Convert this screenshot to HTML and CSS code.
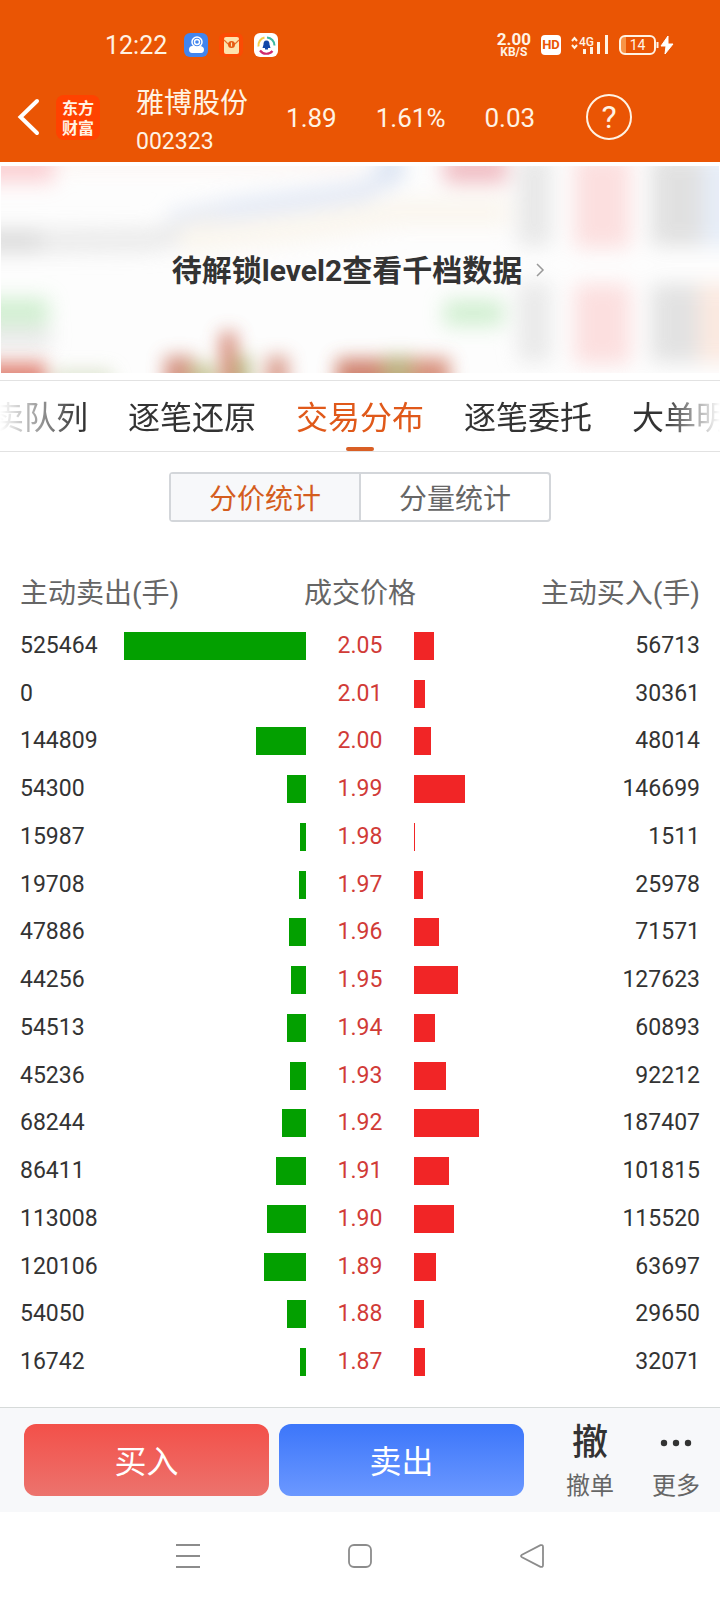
FILE: index.html
```html
<!DOCTYPE html>
<html lang="zh-CN">
<head>
  <meta charset="UTF-8" />
  <meta name="viewport" content="width=device-width, initial-scale=1.0" />
  <title>雅博股份 002323 – 交易分布</title>
  <link rel="stylesheet" href="styles.css">
</head>
<body>
  <header class="header">
    <!-- Status bar -->
    <div class="status-bar">
      <span class="clock">12:22</span>
      <div class="notifications">
        <svg width="24" height="24" viewBox="0 0 24 24">
          <rect width="24" height="24" rx="6" fill="#4285ee" />
          <path d="M5 16.500c0-2 1.500-3.500 3-3.500h8c2 0 4 1.500 4 3.500S19 20 17 20H8c-2 0-3-1.500-3-3.500z" fill="#fff" />
          <circle cx="13" cy="9" r="5" fill="#4285ee" stroke="#fff" stroke-width="1.500" />
          <circle cx="13" cy="9" r="2.500" fill="none" stroke="#fff" stroke-width="1.400" />
        </svg>
        <svg width="24" height="24" viewBox="0 0 24 24">
          <rect width="24" height="24" rx="6" fill="#fb4a04" />
          <rect x="5" y="4" width="15" height="17" rx="2" fill="#fde3ae" />
          <path d="M5 7l4 4h7l4-4" fill="none" stroke="#e8702a" stroke-width="1.200" />
          <circle cx="12.500" cy="11.500" r="3.500" fill="#e65a12" />
          <path d="M12.500 9.500v4" stroke="#fde3ae" stroke-width="1.200" />
        </svg>
        <svg width="24" height="24" viewBox="0 0 24 24">
          <rect width="24" height="24" rx="6" fill="#fff" />
          <path d="M4.500 13.500a8 8 0 0 1 6-9" fill="none" stroke="#f2cf4d" stroke-width="2" />
          <path d="M13 4.500a8 8 0 0 1 7.500 8" fill="none" stroke="#3fb8a0" stroke-width="2" />
          <path d="M6 17.500a8 8 0 0 0 12.500.500" fill="none" stroke="#d02a6c" stroke-width="2.200" />
          <path d="M12.500 7.500c2.500 0 3 2 3 4l1 3.500h-8l1-3.500c0-2 .500-4 3-4zM11 15h3v1.500h-3z" fill="#1147a8" />
        </svg>
      </div>
      <div class="status-right">
        <div class="net-speed"><b>2.00</b><small>KB/S</small></div>
        <span class="hd">HD</span>
        <svg width="38" height="22" viewBox="0 0 38 22">
          <path d="M1 7l2.500-3 2.500 3M1 11l2.500 3 2.500-3" fill="none" stroke="#fff3e4" stroke-width="2" />
          <text x="8" y="12" class="net-type">4G</text>
          <path d="M13.500 15v5M20.500 13v7M27.500 8v12M35.500 1v19" stroke="#fff3e4" stroke-width="3" />
        </svg>
        <div class="battery">
          <span class="battery-body">14</span>
          <svg width="18" height="20" viewBox="0 0 18 20">
            <path d="M1.500 7v6" stroke="#fff3e4" stroke-width="2" />
            <path d="M12 1L5 11h5l-1 8 8-10h-5z" fill="#fff" stroke="#fff" stroke-linejoin="round" />
          </svg>
        </div>
      </div>
    </div>

    <!-- Stock bar -->
    <div class="stock-bar">
      <button class="icon-btn" aria-label="返回">
        <svg width="24" height="40" viewBox="0 0 24 40">
          <path d="M21 4L4.500 20 21 36" fill="none" stroke="#fff" stroke-width="4" stroke-linecap="round" />
        </svg>
      </button>
      <div class="logo">东方<br>财富</div>
      <div class="stock-name">
        <h1>雅博股份</h1>
        <span>002323</span>
      </div>
      <div class="quote">
        <span>1.89</span>
        <span>1.61%</span>
        <span>0.03</span>
      </div>
      <button class="icon-btn help" aria-label="帮助">?</button>
    </div>
  </header>

  <!-- Level2 banner -->
  <a class="banner" href="#">
    <svg class="banner-bg" viewBox="0 0 720 207" preserveAspectRatio="none">
      <defs>
        <filter id="soft" x="-20%" y="-20%" width="140%" height="140%"><feGaussianBlur stdDeviation="10" /></filter>
        <filter id="soft-bars" x="-20%" y="-50%" width="140%" height="200%"><feGaussianBlur stdDeviation="9" /></filter>
      </defs>
      <g filter="url(#soft)" opacity="0.8">
        <rect x="-20" y="-14" width="74" height="30" fill="#fbc6ca" />
        <rect x="60" y="-12" width="300" height="16" fill="#fdf3ef" />
        <path d="M170 56L240 42 360 26 400 4" fill="none" stroke="#dfe6f4" stroke-width="22" />
        <path d="M-20 75H45" fill="none" stroke="#d4d4d4" stroke-width="24" />
        <path d="M40 75L150 74 220 58" fill="none" stroke="#e6e6e6" stroke-width="24" />
        <path d="M180 74L300 62 400 46H510" fill="none" stroke="#faf5ec" stroke-width="30" />
        <rect x="378" y="-12" width="26" height="26" fill="#d3def0" />
        <rect x="444" y="-14" width="64" height="32" fill="#eeb0b8" />
        <rect x="-20" y="132" width="68" height="28" fill="#c6ecc6" />
        <rect x="-20" y="162" width="70" height="20" fill="#e4e4e4" />
        <rect x="444" y="134" width="60" height="26" fill="#c6ecc6" />
        <rect x="518" y="-10" width="34" height="90" fill="#e3e3e3" />
        <rect x="518" y="116" width="34" height="80" fill="#e5e5e5" />
        <rect x="575" y="-10" width="56" height="92" fill="#fcd8d8" />
        <rect x="575" y="118" width="56" height="80" fill="#fcd8d8" />
        <rect x="652" y="-10" width="54" height="90" fill="#dadada" />
        <rect x="652" y="118" width="54" height="78" fill="#dcdcdc" />
        <rect x="704" y="-10" width="40" height="90" fill="#e2eaf7" />
        <rect x="700" y="118" width="44" height="78" fill="#fbe5da" />
      </g>
      <g filter="url(#soft-bars)" opacity="0.75">
        <rect x="-20" y="196" width="66" height="44" fill="#d8624f" />
        <rect x="52" y="204" width="60" height="30" fill="#d3dcc0" />
        <rect x="164" y="190" width="30" height="50" fill="#c8705a" />
        <rect x="190" y="198" width="24" height="40" fill="#b2b878" />
        <rect x="220" y="166" width="16" height="70" fill="#c8604a" />
        <rect x="236" y="190" width="14" height="50" fill="#a0a860" />
        <rect x="266" y="190" width="22" height="50" fill="#cf7f6a" />
        <rect x="336" y="192" width="50" height="48" fill="#c25f45" />
        <rect x="384" y="190" width="30" height="50" fill="#a59a58" />
        <rect x="412" y="192" width="38" height="48" fill="#cc6f55" />
      </g>
    </svg>
    <span>待解锁level2查看千档数据</span>
    <svg width="10" height="14" viewBox="0 0 10 14">
      <path d="M1 1l6 6-6 6" fill="none" stroke="#999" stroke-width="1.500" />
    </svg>
  </a>

  <!-- Tabs -->
  <nav class="tabs">
    <div class="tabs-list">
      <a href="#">买卖队列</a>
      <a href="#">逐笔还原</a>
      <a href="#" class="active">交易分布</a>
      <a href="#">逐笔委托</a>
      <a href="#">大单明细</a>
    </div>
  </nav>

  <main class="content">
    <div class="segment">
      <button class="active">分价统计</button>
      <button>分量统计</button>
    </div>

    <table class="dist">
      <thead>
        <tr>
          <th class="sell">主动卖出(手)</th>
          <th class="price">成交价格</th>
          <th class="buy">主动买入(手)</th>
        </tr>
      </thead>
      <tbody id="rows"></tbody>
    </table>
  </main>

  <!-- Trade buttons -->
  <footer class="trade-bar">
    <button class="trade-btn buy-btn">买入</button>
    <button class="trade-btn sell-btn">卖出</button>
    <div class="tools">
      <button class="tool"><span class="tool-icon">撤</span>撤单</button>
      <button class="tool">
        <span class="tool-icon">
          <svg width="32" height="8" viewBox="0 0 32 8">
            <circle cx="4" cy="4" r="3.200" fill="#333" />
            <circle cx="16" cy="4" r="3.200" fill="#333" />
            <circle cx="28" cy="4" r="3.200" fill="#333" />
          </svg>
        </span>更多
      </button>
    </div>
  </footer>

  <!-- System navigation -->
  <div class="system-nav">
    <button class="icon-btn" aria-label="最近任务">
      <svg width="24" height="24" viewBox="0 0 24 24">
        <path d="M0 1h24M0 12h24M0 23h24" stroke="#8c8c8c" stroke-width="2" />
      </svg>
    </button>
    <button class="icon-btn" aria-label="主屏幕">
      <svg width="24" height="24" viewBox="0 0 24 24">
        <rect x="1" y="1" width="22" height="22" rx="5" fill="none" stroke="#8c8c8c" stroke-width="1.800" />
      </svg>
    </button>
    <button class="icon-btn" aria-label="返回上一页">
      <svg width="24" height="24" viewBox="0 0 24 24">
        <path d="M2 10.700L20.500 1.200Q23 .500 23 3v18q0 2.500-2.500 1.800L2 13.300Q0 12 2 10.700z" fill="none" stroke="#8c8c8c" stroke-width="1.800" />
      </svg>
    </button>
  </div>

  <script src="script.js"></script>
</body>
</html>
```

FILE: styles.css
```css
* {
  box-sizing: border-box;
}

body {
  margin: 0;
  min-height: 100vh;
  display: flex;
  flex-direction: column;
  font-family: Roboto, "Noto Sans CJK SC", sans-serif;
  background: #fff;
  color: #333;
}

button {
  font-family: inherit;
  border: none;
  padding: 0;
  background: none;
  cursor: pointer;
}

a {
  color: inherit;
  text-decoration: none;
}

svg {
  display: block;
}

/* Header */
.header {
  background: #ea5504;
  color: #fff3e4;
}

.status-bar {
  display: flex;
  align-items: center;
  height: 90px;
  padding: 0 46px 0 105px;
}

.clock {
  font-size: 25px;
}

.notifications {
  display: flex;
  gap: 11px;
  margin-left: 17px;
}

.status-right {
  display: flex;
  align-items: center;
  gap: 10px;
  margin-left: auto;
}

.net-speed {
  display: flex;
  flex-direction: column;
  align-items: center;
}

.net-speed b {
  font-size: 17px;
  line-height: 13px;
}

.net-speed small {
  font-size: 12px;
  line-height: 12px;
  font-weight: bold;
}

.hd {
  width: 20px;
  height: 20px;
  border-radius: 4px;
  background: #fff;
  color: #ea5504;
  font-size: 13px;
  font-weight: bold;
  line-height: 20px;
  text-align: center;
}

.net-type {
  fill: #fff3e4;
  font-size: 12px;
  font-weight: 500;
}

.battery {
  display: flex;
  align-items: center;
}

.battery-body {
  width: 37px;
  height: 20px;
  border: 2px solid #fff3e4;
  border-radius: 6px;
  background: linear-gradient(90deg, #f79447 5px, transparent 5px);
  font-size: 14px;
  line-height: 16px;
  text-align: center;
}

.stock-bar {
  display: flex;
  align-items: center;
  height: 72px;
  padding: 0 16px 18px;
}

.icon-btn {
  color: inherit;
}

.logo {
  width: 44px;
  height: 45px;
  margin: 0 36px 0 16px;
  padding-top: 2px;
  border-radius: 8px;
  background: #ff4200;
  font-family: "Noto Sans CJK SC", sans-serif;
  font-size: 16px;
  font-weight: bold;
  line-height: 20px;
  text-align: center;
}

.stock-name {
  margin-top: 10px;
}

.stock-name h1 {
  margin: 0;
  font-size: 28px;
  font-weight: normal;
  line-height: 40px;
}

.stock-name span {
  display: block;
  font-size: 23px;
  line-height: 36px;
}

.quote {
  display: flex;
  gap: 39px;
  margin: 2px 51px 0 38px;
  font-size: 26px;
}

.help {
  width: 46px;
  height: 46px;
  border: 2px solid #fff3e4;
  border-radius: 50%;
  font-size: 32px;
  line-height: 42px;
}

/* Level2 banner */
.banner {
  position: relative;
  display: flex;
  align-items: center;
  justify-content: center;
  gap: 14px;
  height: 207px;
  margin: 4px 1px 7px;
  padding-right: 2px;
  background: #fdfdfd;
  font-size: 30px;
  font-weight: bold;
  line-height: 36px;
}

.banner-bg {
  position: absolute;
  top: 0;
  left: 0;
  width: 100%;
  height: 100%;
  overflow: hidden;
}

.banner span,
.banner-bg + span + svg {
  position: relative;
}

.banner span {
  padding-top: 2px;
}

/* Tabs */
.tabs {
  border-top: 1px solid #e2e2e2;
  border-bottom: 1px solid #e2e2e2;
}

.tabs-list {
  display: flex;
  justify-content: center;
  gap: 40px;
  overflow: hidden;
  -webkit-mask-image: linear-gradient(90deg, transparent, #000 80px, #000 calc(100% - 56px), transparent);
  mask-image: linear-gradient(90deg, transparent, #000 80px, #000 calc(100% - 56px), transparent);
}

.tabs a {
  position: relative;
  flex: none;
  padding-top: 4px;
  font-size: 32px;
  line-height: 66px;
}

.tabs a.active {
  color: #e0591a;
}

.tabs a.active::after {
  content: "";
  position: absolute;
  bottom: 0;
  left: 50%;
  width: 28px;
  height: 4px;
  margin-left: -14px;
  border-radius: 2px;
  background: #d95f25;
}

/* Content */
.content {
  flex: 1;
  display: flex;
  flex-direction: column;
  padding: 20px 20px 21px;
}

.segment {
  display: flex;
  width: 382px;
  height: 50px;
  margin: 0 auto 44px;
  border: 2px solid #d3d6da;
  border-radius: 4px;
}

.segment button {
  flex: 1;
  color: #666;
  font-size: 28px;
}

.segment button.active {
  border-right: 2px solid #d3d6da;
  background: #f7f8fa;
  color: #d45d1e;
}

.dist {
  flex: 1;
  display: flex;
  flex-direction: column;
}

.dist tbody {
  flex: 1;
  display: flex;
  flex-direction: column;
}

.dist thead tr {
  display: flex;
  justify-content: space-between;
}

.dist th {
  padding: 0;
  color: #666;
  font-size: 28px;
  font-weight: normal;
  line-height: 56px;
}

.dist tbody tr {
  flex: 1;
  display: grid;
  grid-template-columns: 104px 1fr 108px 1fr 104px;
  align-items: center;
}

.dist td {
  padding: 0;
  font-size: 23px;
  line-height: 28px;
}

.dist td.price {
  color: #d13b37;
  text-align: center;
}

.dist td.buy {
  text-align: right;
}

.bar {
  height: 28px;
}

.bar-sell {
  margin-left: auto;
  background: #03a000;
}

.bar-buy {
  background: #f12526;
}

/* Trade buttons */
.trade-bar {
  display: flex;
  align-items: center;
  gap: 10px;
  height: 105px;
  padding: 0 20px 0 24px;
  border-top: 1px solid #d6dad9;
  background: #f7f8fa;
}

.trade-btn {
  flex: 1;
  height: 72px;
  padding-bottom: 3px;
  border-radius: 12px;
  color: #fff;
  font-size: 32px;
}

.buy-btn {
  background: linear-gradient(#f35049, #ec736d);
}

.sell-btn {
  background: linear-gradient(#3c76fa, #6b98ff);
}

.tools {
  display: flex;
  gap: 38px;
  margin-left: 32px;
}

.tool {
  padding-top: 2px;
  color: #666;
  font-size: 24px;
  line-height: 36px;
}

.tool-icon {
  display: flex;
  align-items: center;
  justify-content: center;
  height: 50px;
  color: #333;
  font-size: 36px;
  font-weight: 500;
}

/* System navigation */
.system-nav {
  display: flex;
  align-items: center;
  justify-content: center;
  gap: 148px;
  height: 88px;
}
```

FILE: script.js
```javascript
// [price, sell volume, buy volume]
const data = [
  ["2.05", 525464, 56713],
  ["2.01", 0, 30361],
  ["2.00", 144809, 48014],
  ["1.99", 54300, 146699],
  ["1.98", 15987, 1511],
  ["1.97", 19708, 25978],
  ["1.96", 47886, 71571],
  ["1.95", 44256, 127623],
  ["1.94", 54513, 60893],
  ["1.93", 45236, 92212],
  ["1.92", 68244, 187407],
  ["1.91", 86411, 101815],
  ["1.90", 113008, 115520],
  ["1.89", 120106, 63697],
  ["1.88", 54050, 29650],
  ["1.87", 16742, 32071]
];

const max = Math.max(...data.map(([, sell, buy]) => Math.max(sell, buy)));
const percent = (n) => (n / max * 100).toFixed(2) + "%";

document.getElementById("rows").innerHTML = data.map(([price, sell, buy]) => `
  <tr>
    <td class="sell">${sell}</td>
    <td><div class="bar bar-sell" style="width: ${percent(sell)}"></div></td>
    <td class="price">${price}</td>
    <td><div class="bar bar-buy" style="width: ${percent(buy)}"></div></td>
    <td class="buy">${buy}</td>
  </tr>`).join("");
```
